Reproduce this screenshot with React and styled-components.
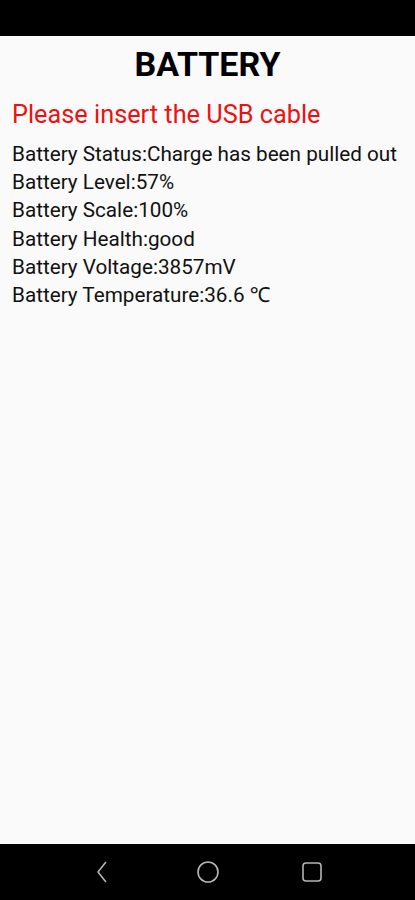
import React from 'react';
import styled, { createGlobalStyle } from 'styled-components';

const GlobalStyle = createGlobalStyle`
  html, body {
    margin: 0;
    padding: 0;
    background: #fafafa;
  }
  body {
    font-family: Roboto, "Noto Sans", "Liberation Sans", sans-serif;
  }
`;

const Screen = styled.div`
  width: 415px;
  height: 900px;
  display: flex;
  flex-direction: column;
  background: #fafafa;
`;

const StatusBar = styled.div`
  height: 36px;
  background: #000;
  flex-shrink: 0;
`;

const Content = styled.div`
  flex: 1;
  padding: 0 12px;
`;

const Title = styled.h1`
  margin: 4px 0 0;
  text-align: center;
  font-size: 34px;
  font-weight: 700;
  line-height: 48px;
  color: #000;
`;

const Warning = styled.p`
  margin: 10px 0 0;
  font-size: 25.3px;
  line-height: 34px;
  color: #ee1111;
`;

const InfoList = styled.div`
  margin-top: 8px;
  display: flex;
  flex-direction: column;
`;

const InfoLine = styled.div`
  font-size: 20.7px;
  line-height: 28.2px;
  color: #111;
  white-space: nowrap;
`;

const NavBar = styled.div`
  height: 56px;
  flex-shrink: 0;
  background: #000;
  display: flex;
  align-items: center;
  justify-content: center;
  gap: 80px;
`;

const NavButton = styled.div`
  width: 24px;
  height: 24px;
  display: flex;
  align-items: center;
  justify-content: center;
`;

const info = [
  'Battery Status:Charge has been pulled out',
  'Battery Level:57%',
  'Battery Scale:100%',
  'Battery Health:good',
  'Battery Voltage:3857mV',
  'Battery Temperature:36.6 \u2103',
];

export default function App() {
  return (
    <>
      <GlobalStyle />
      <Screen>
        <StatusBar />
        <Content>
          <Title>BATTERY</Title>
          <Warning>Please insert the USB cable</Warning>
          <InfoList>
            {info.map((line) => (
              <InfoLine key={line}>{line}</InfoLine>
            ))}
          </InfoList>
        </Content>
        <NavBar>
          <NavButton>
            <svg width="24" height="24" viewBox="0 0 24 24" fill="none" stroke="#b5b5b5" strokeWidth="1.6" strokeLinecap="round" strokeLinejoin="round">
              <path d="M13.5 2.5 L6 12 L13.5 21.5" />
            </svg>
          </NavButton>
          <NavButton>
            <svg width="24" height="24" viewBox="0 0 24 24" fill="none" stroke="#b5b5b5" strokeWidth="1.6">
              <circle cx="12" cy="12" r="10" />
            </svg>
          </NavButton>
          <NavButton>
            <svg width="24" height="24" viewBox="0 0 24 24" fill="none" stroke="#b5b5b5" strokeWidth="1.6">
              <rect x="3" y="3" width="18" height="18" rx="3" />
            </svg>
          </NavButton>
        </NavBar>
      </Screen>
    </>
  );
}
